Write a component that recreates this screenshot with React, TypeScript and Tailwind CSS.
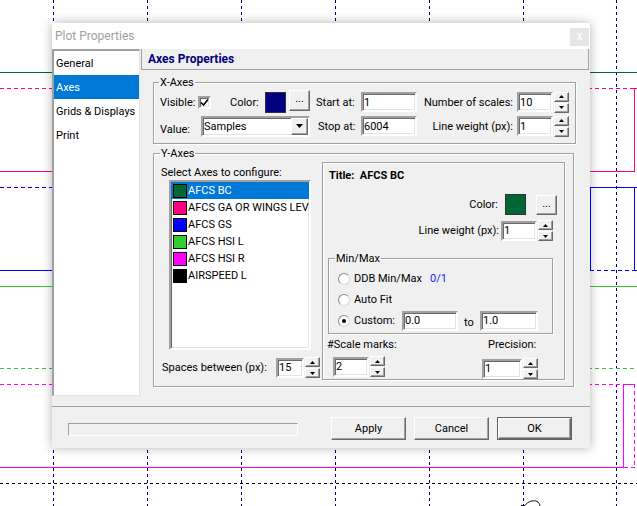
import React from 'react';

const sunken =
  'bg-white border-2 border-t-[#a0a0a0] border-l-[#a0a0a0] border-r-white border-b-white shadow-[inset_1px_1px_0_#696969,inset_-1px_-1px_0_#e3e3e3]';
const raised =
  'bg-[#f0f0f0] border border-t-white border-l-white border-r-[#696969] border-b-[#696969] shadow-[inset_-1px_-1px_0_#a0a0a0]';
const etched = 'border border-[#a0a0a0] shadow-[inset_1px_1px_0_#fff,1px_1px_0_#fff]';

const axes = [
  { name: 'AFCS BC', color: '#006633' },
  { name: 'AFCS GA OR WINGS LEVEL', color: '#ff0080' },
  { name: 'AFCS GS', color: '#0000ff' },
  { name: 'AFCS HSI L', color: '#33cc33' },
  { name: 'AFCS HSI R', color: '#ff00ff' },
  { name: 'AIRSPEED  L', color: '#000000' },
];

function PlotBackground() {
  const grid = [53, 147, 241, 335, 429, 523, 616];
  const h = (y: number, x1: number, x2: number, color: string, dash?: string) => (
    <line x1={x1} y1={y + 0.5} x2={x2} y2={y + 0.5} stroke={color} strokeDasharray={dash} />
  );
  const v = (x: number, y1: number, y2: number, color: string, dash?: string) => (
    <line x1={x + 0.5} y1={y1} x2={x + 0.5} y2={y2} stroke={color} strokeDasharray={dash} />
  );
  return (
    <svg className="absolute inset-0" width="637" height="506" shapeRendering="crispEdges">
      {grid.map((x) => (
        <g key={x}>{v(x, 0, 506, '#000080', '3 3')}</g>
      ))}
      {h(72, 0, 637, '#006633')}
      {/* pink */}
      {h(88, 0, 634, '#ff0080', '4 3')}
      {h(88, 634, 637, '#ff0080')}
      {h(171, 0, 635, '#ff0080')}
      {v(634, 88, 171, '#ff0080')}
      {/* blue */}
      {h(187, 0, 590, '#0000ff', '4 3')}
      {h(187, 590, 635, '#0000ff')}
      {h(187, 635, 637, '#0000ff', '2 2')}
      {h(270, 0, 590, '#0000ff')}
      {h(270, 590, 634, '#0000ff', '4 3')}
      {h(270, 634, 637, '#0000ff')}
      {v(590, 187, 270, '#0000ff')}
      {v(634, 187, 270, '#0000ff')}
      {/* green */}
      {h(286, 0, 637, '#33cc33')}
      {h(368, 0, 637, '#33cc33', '4 3')}
      {/* magenta */}
      {h(384, 0, 623, '#ff00ff', '4 3')}
      {h(384, 623, 634, '#ff00ff')}
      <path d="M0 467.5H624" stroke="#ff00ff" strokeWidth="1" fill="none" />
      {h(467, 624, 637, '#ff00ff', '4 3')}
      {v(623, 384, 467, '#ff00ff')}
      {v(634, 384, 467, '#ff00ff', '4 3')}
      {h(483, 0, 637, '#000000', '3 3')}
      <path
        d="M521 505.5H525M525 505.5Q527 502 531 501Q536 500 538 502Q540 504 540 506"
        fill="none"
        stroke="#000"
        strokeWidth="0.9"
        shapeRendering="auto"
      />
    </svg>
  );
}

function Spin() {
  return (
    <div className="flex flex-col gap-px w-[15px]">
      <div className={`h-[10px] flex items-center justify-center ${raised}`}>
        <svg width="5" height="3" viewBox="0 0 5 3">
          <path d="M2.5 0L5 3H0Z" fill="#000" />
        </svg>
      </div>
      <div className={`h-[10px] flex items-center justify-center ${raised}`}>
        <svg width="5" height="3" viewBox="0 0 5 3">
          <path d="M0 0H5L2.5 3Z" fill="#000" />
        </svg>
      </div>
    </div>
  );
}

function Radio({ checked }: { checked?: boolean }) {
  return (
    <div className="w-[12px] h-[12px] rounded-full bg-white border border-t-[#8a8a8a] border-l-[#8a8a8a] border-r-[#d8d8d8] border-b-[#d8d8d8] flex items-center justify-center">
      {checked && <div className="w-[4px] h-[4px] rounded-full bg-black" />}
    </div>
  );
}

function Dots({ className }: { className: string }) {
  return (
    <div className={`${raised} ${className} flex items-center justify-center text-[11px] leading-none pb-[3px]`}>...</div>
  );
}

export default function App() {
  return (
    <div className="relative w-[637px] h-[506px] overflow-hidden bg-white font-['Roboto','Liberation_Sans',sans-serif] text-[11px] leading-[13px] text-black">
      <PlotBackground />

      {/* Dialog */}
      <div className="absolute left-[52px] top-[23px] w-[538px] h-[425px] flex flex-col bg-[#f0f0f0] shadow-[0_0_10px_rgba(0,0,0,0.3)]">
        {/* Title bar */}
        <div className="h-[26px] bg-white flex items-center justify-between pl-[3px] pr-px">
          <span className="text-[12px] text-[#a0a0a0] mt-px">Plot Properties</span>
          <div className="w-[19px] h-[18px] mt-[2px] bg-[#e6e6e6] text-white text-[12px] leading-[16px] text-center">x</div>
        </div>

        {/* Main */}
        <div className="flex h-[357px]">
          {/* Nav */}
          <div className="w-[88px] h-[347px] bg-white border-t-2 border-l-2 border-t-[#a0a0a0] border-l-[#a0a0a0] border-r border-b border-r-[#e3e3e3] border-b-[#e3e3e3]">
            {['General', 'Axes', 'Grids & Displays', 'Print'].map((n) => (
              <div
                key={n}
                className={`h-[24px] flex items-center pl-[2px] whitespace-nowrap ${n === 'Axes' ? 'bg-[#0078d7] text-white' : ''}`}
              >
                {n}
              </div>
            ))}
          </div>

          {/* Right pane */}
          <div className="ml-px w-[448px] flex flex-col">
            <div className="h-[21px] border-l border-r border-b border-[#a0a0a0] flex items-center pl-[6px] text-[12px] font-bold text-[#000080]">
              Axes Properties
            </div>

            {/* X-Axes */}
            <fieldset className={`ml-[12px] mt-[6px] w-[421px] ${etched} px-[6px] pb-[7px]`}>
              <legend className="px-px -ml-px">X-Axes</legend>
              <div className="pt-[3px] flex flex-col gap-[4px]">
                <div className="flex items-center h-[20px]">
                  <span className="w-[38px]">Visible:</span>
                  <div className={`w-[13px] h-[13px] flex items-center justify-center ${sunken} border`}>
                    <svg width="9" height="9" viewBox="0 0 9 9">
                      <path d="M1 4.5L3.5 7L8 1.5" fill="none" stroke="#000" strokeWidth="1.6" />
                    </svg>
                  </div>
                  <span className="ml-[19px] w-[35px]">Color:</span>
                  <div className="w-[21px] h-[21px] bg-[#000080] border border-[#333]" />
                  <Dots className="ml-[3px] w-[21px] h-[21px] -mt-[4px]" />
                  <span className="ml-[6px] w-[45px]">Start at:</span>
                  <input readOnly defaultValue="1" className={`${sunken} w-[56px] h-[20px] pl-px outline-none`} />
                  <span className="w-[100px] text-right pr-[4px]">Number of scales:</span>
                  <input readOnly defaultValue="10" className={`${sunken} w-[36px] h-[20px] pl-px outline-none`} />
                  <div className="ml-px">
                    <Spin />
                  </div>
                </div>
                <div className="flex items-center h-[20px]">
                  <span className="w-[41px] mt-[6px]">Value:</span>
                  <div className={`${sunken} w-[109px] h-[21px] flex items-center justify-between pl-px`}>
                    <span>Samples</span>
                    <div className={`${raised} w-[17px] h-[17px] flex items-center justify-center`}>
                      <svg width="7" height="4" viewBox="0 0 7 4">
                        <path d="M0 0H7L3.5 4Z" fill="#000" />
                      </svg>
                    </div>
                  </div>
                  <span className="ml-[8px] w-[43px]">Stop at:</span>
                  <input readOnly defaultValue="6004" className={`${sunken} w-[56px] h-[20px] pl-px outline-none`} />
                  <span className="w-[100px] text-right pr-[4px]">Line weight (px):</span>
                  <input readOnly defaultValue="1" className={`${sunken} w-[36px] h-[20px] pl-px outline-none`} />
                  <div className="ml-px">
                    <Spin />
                  </div>
                </div>
              </div>
            </fieldset>

            {/* Y-Axes */}
            <fieldset className={`ml-[12px] mt-[3px] w-[421px] ${etched} px-[7px] pb-[6px]`}>
              <legend className="px-px -ml-px">Y-Axes</legend>
              <div className="flex">
                <div className="w-[161px] flex flex-col">
                  <span className="mt-[6px]">Select Axes to configure:</span>
                  <div className={`${sunken} ml-[8px] mt-px w-[142px] h-[170px] overflow-hidden`}>
                    {axes.map((a, i) => (
                      <div
                        key={a.name}
                        className={`h-[17px] flex items-center whitespace-nowrap ${i === 0 ? 'bg-[#0078d7] text-white' : ''}`}
                      >
                        <div className="ml-[2px] w-[14px] h-[14px] shrink-0 border border-black" style={{ backgroundColor: a.color }} />
                        <span className="ml-px">{a.name}</span>
                      </div>
                    ))}
                  </div>
                  <div className="mt-[7px] flex items-center h-[21px]">
                    <span className="w-[115px] pl-px">Spaces between (px):</span>
                    <input readOnly defaultValue="15" className={`${sunken} w-[28px] h-[20px] pl-px outline-none`} />
                    <div className="ml-px">
                      <Spin />
                    </div>
                  </div>
                </div>

                {/* Axis detail panel */}
                <div className={`mt-[2px] w-[243px] h-[218px] ${etched} flex flex-col`}>
                  <div className="pl-[6px] pt-[6px] font-bold">Title:&nbsp; AFCS BC</div>
                  <div className="mt-[12px] flex items-center justify-end pr-[7px]">
                    <span className="mr-[7px]">Color:</span>
                    <div className="w-[21px] h-[21px] bg-[#006633] border border-[#333]" />
                    <Dots className="ml-[10px] w-[21px] h-[20px]" />
                  </div>
                  <div className="mt-[5px] flex items-center justify-end pr-[11px]">
                    <span className="mr-[2px]">Line weight (px):</span>
                    <input readOnly defaultValue="1" className={`${sunken} w-[36px] h-[20px] pl-px outline-none`} />
                    <div className="ml-px">
                      <Spin />
                    </div>
                  </div>

                  <fieldset className={`ml-[5px] mt-[11px] w-[225px] ${etched} pl-[9px] pb-[2px]`}>
                    <legend className="ml-[-3px] px-px">Min/Max</legend>
                    <div className="pt-[3px]">
                      <div className="h-[21px] flex items-center">
                        <Radio />
                        <span className="ml-[4px]">DDB Min/Max</span>
                        <span className="ml-[8px] text-[#2020ff]">0/1</span>
                      </div>
                      <div className="h-[21px] flex items-center">
                        <Radio />
                        <span className="ml-[4px]">Auto Fit</span>
                      </div>
                      <div className="h-[21px] flex items-center">
                        <Radio checked />
                        <span className="ml-[4px] w-[48px]">Custom:</span>
                        <input readOnly defaultValue="0.0" className={`${sunken} w-[56px] h-[20px] pl-px outline-none`} />
                        <span className="ml-[6px] mt-[3px] w-[16px]">to</span>
                        <input readOnly defaultValue="1.0" className={`${sunken} w-[58px] h-[20px] pl-px outline-none`} />
                      </div>
                    </div>
                  </fieldset>

                  <div className="mt-[4px] flex justify-between pl-[4px] pr-[26px]">
                    <div className="flex flex-col">
                      <span>#Scale marks:</span>
                      <div className="mt-[5px] ml-[6px] flex items-center">
                        <input readOnly defaultValue="2" className={`${sunken} w-[36px] h-[20px] pl-px outline-none`} />
                        <div className="ml-px">
                          <Spin />
                        </div>
                      </div>
                    </div>
                    <div className="flex flex-col w-[56px]">
                      <span className="pl-[6px]">Precision:</span>
                      <div className="mt-[7px] flex items-center">
                        <input readOnly defaultValue="1" className={`${sunken} w-[40px] h-[20px] pl-px outline-none`} />
                        <div className="ml-px">
                          <Spin />
                        </div>
                      </div>
                    </div>
                  </div>
                </div>
              </div>
            </fieldset>
          </div>
        </div>

        {/* Footer */}
        <div className="flex-1 border-t border-[#a0a0a0] flex items-start">
          <div className="ml-[16px] mt-[16px] w-[230px] h-[13px] border border-t-[#a0a0a0] border-l-[#a0a0a0] border-r-white border-b-white" />
          <div className="ml-[33px] mt-[10px] flex gap-[8px]">
            <button className={`${raised} w-[75px] h-[23px]`}>Apply</button>
            <button className={`${raised} w-[75px] h-[23px]`}>Cancel</button>
            <div className="border border-[#646464]">
              <button className={`${raised} w-[73px] h-[21px] block`}>OK</button>
            </div>
          </div>
        </div>
      </div>
    </div>
  );
}
